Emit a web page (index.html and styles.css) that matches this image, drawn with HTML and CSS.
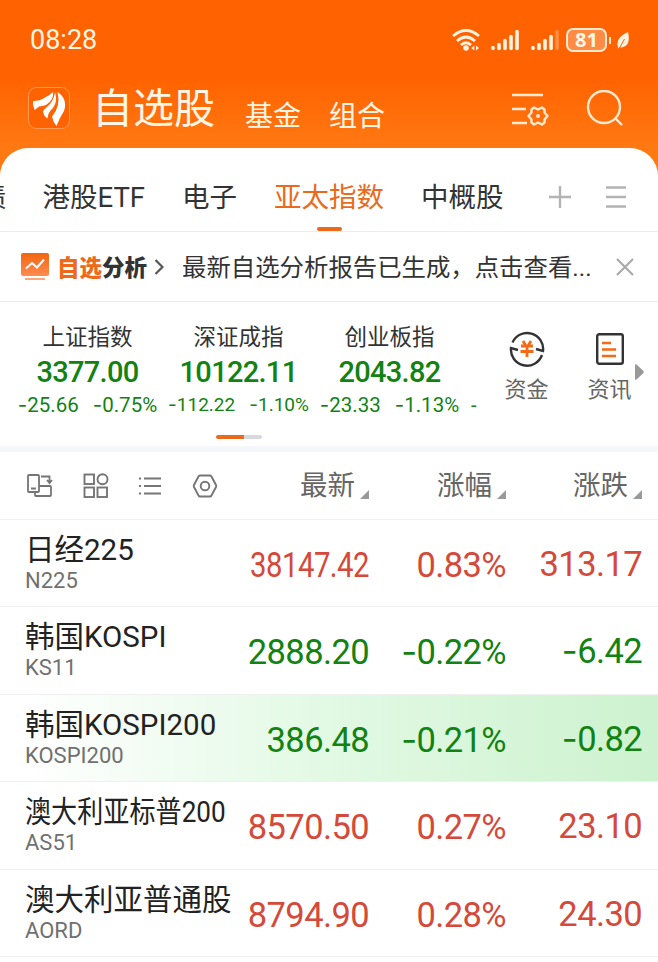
FILE: index.html
```
<!DOCTYPE html>
<html lang="zh-CN">
<head>
  <meta charset="UTF-8" />
  <meta name="viewport" content="width=device-width, initial-scale=1.0" />
  <title>自选股</title>
  <link rel="stylesheet" href="styles.css">
</head>
<body>
  <header class="header">
    <div class="status-bar">
      <span class="time">08:28</span>
      <div class="status-icons">
        <svg class="wifi" width="28" height="24" viewBox="0 0 28 24" fill="none" stroke="#fff3df" stroke-width="2.8">
          <path d="M1 8Q14-3 27 8M5 13Q14 5 23 13M9 17Q14 12.5 19 17"/>
          <circle cx="14" cy="20" r="2.8" fill="#fff3df" stroke="none"/>
          <path d="M22.3 17.5v5l-3-2.5zM24 17.5v5l3-2.5z" fill="#fff3df" stroke="none"/>
        </svg>
        <svg class="signal" width="28" height="22" viewBox="0 0 28 22" stroke="#fff3df" stroke-width="3.6" stroke-linecap="round">
          <path d="M2 18.5v1M8 15.5v4M14 11.5v8M20 7.5v12M26 2.5v17"/>
        </svg>
        <svg class="signal" width="28" height="22" viewBox="0 0 28 22" stroke="#fff3df" stroke-width="3.6" stroke-linecap="round">
          <path d="M2 18.5v1M8 15.5v4M14 11.5v8M20 7.5v12"/>
          <path d="M26 2.5v17" opacity=".3"/>
        </svg>
        <div class="battery">81</div>
        <svg width="12" height="18" viewBox="0 0 12 18">
          <path d="M11 1Q14 14 6 16Q4 17 3 16L1.5 17.5Q-3 7 11 1z" fill="#fff3df"/>
          <path d="M2.5 17L7.5 8" stroke="#ff6400" stroke-width="1"/>
        </svg>
      </div>
    </div>
    <div class="title-bar">
      <svg class="logo" width="42" height="42" viewBox="0 0 42 42">
        <rect x=".5" y=".5" width="41" height="41" rx="8" fill="#ff6200" stroke="#ff9a55"/>
        <path d="M5 14Q12 14 17 10.5Q22 8 25 5Q26 13 18 18Q14 19 11 19.5Q9 21 6.5 23Q4.5 18 5 14z" fill="#fff"/>
        <path d="M27 5Q30 14 25 21Q20 25 19.500 31.500Q16.500 30 15 25Q15 23 19 20Q26 14 27 5z" fill="#fff"/>
        <path d="M29.500 5Q40 12 36 24Q32 30 28.500 39Q25 35 24 29.500Q33 19 29.500 5z" fill="#fff"/>
      </svg>
      <span class="title-main">自选股</span>
      <span class="title-sub">基金</span>
      <span class="title-sub">组合</span>
      <div class="title-actions">
        <svg width="38" height="34" viewBox="0 0 38 34" fill="none" stroke="#ffe9cf" stroke-width="2.4">
          <path d="M1 2h31M1 16h14M1 30h15"/>
          <path d="M23 14.5l4 2 4-2 2.5 2v3l3 3.5-3 3.5v3l-2.5 2-4-2-4 2-2.5-2v-3l-3-3.5 3-3.5v-3z" stroke-linejoin="round"/>
          <circle cx="27" cy="23" r="2" fill="#ffe9cf" stroke="none"/>
        </svg>
        <svg width="38" height="38" viewBox="0 0 38 38" fill="none" stroke="#ffe9cf" stroke-width="2.4">
          <circle cx="18" cy="17" r="16"/>
          <path d="M29 28l7 7"/>
        </svg>
      </div>
    </div>
  </header>

  <main class="panel">
    <nav class="tabs">
      <span class="tab tab-cut">债</span>
      <span class="tab">港股ETF</span>
      <span class="tab">电子</span>
      <span class="tab active">亚太指数</span>
      <span class="tab">中概股</span>
      <div class="tab-actions">
        <svg width="24" height="24" viewBox="0 0 24 24" stroke="#b3b3b3" stroke-width="2.4"><path d="M12 1v22M1 12h22"/></svg>
        <svg width="22" height="24" viewBox="0 0 22 24" stroke="#b3b3b3" stroke-width="2.4"><path d="M1 2.5h20M1 12h20M1 21.5h20"/></svg>
      </div>
    </nav>

    <section class="notice">
      <svg class="notice-icon" width="28" height="28" viewBox="0 0 28 28">
        <defs>
          <linearGradient id="chartFill" x1="0" y1="0" x2="0" y2="1">
            <stop offset="0" stop-color="#f2650f"/>
            <stop offset="1" stop-color="#ff8c50"/>
          </linearGradient>
        </defs>
        <rect width="28" height="23" rx="2" fill="url(#chartFill)"/>
        <path d="M5 15.5l6-5.5 5 4.5 7-8" fill="none" stroke="#fff" stroke-width="2"/>
        <path d="M4 26h20" stroke="#f9a878" stroke-width="2"/>
      </svg>
      <b class="notice-name"><em>自选</em>分析</b>
      <svg class="notice-arrow" width="10" height="16" viewBox="0 0 10 16" fill="none" stroke="#555" stroke-width="2.2"><path d="M1.5 1l7 7-7 7"/></svg>
      <span class="notice-text">最新自选分析报告已生成，点击查看...</span>
      <svg class="notice-close" width="18" height="18" viewBox="0 0 18 18" stroke="#aaa" stroke-width="2.2"><path d="M1 1l16 16M17 1L1 17"/></svg>
    </section>

    <section class="market">
      <div class="indices">
        <div class="index">
          <div class="index-name">上证指数</div>
          <div class="index-value">3377.00</div>
          <div class="index-change"><span><i>-</i>25.66</span><span><i>-</i>0.75%</span></div>
        </div>
        <div class="index">
          <div class="index-name">深证成指</div>
          <div class="index-value">10122.11</div>
          <div class="index-change small"><span><i>-</i>112.22</span><span><i>-</i>1.10%</span></div>
        </div>
        <div class="index">
          <div class="index-name">创业板指</div>
          <div class="index-value">2043.82</div>
          <div class="index-change"><span><i>-</i>23.33</span><span><i>-</i>1.13%</span></div>
        </div>
        <div class="index-next">-</div>
      </div>
      <div class="shortcut">
        <svg width="36" height="36" viewBox="0 0 36 36" fill="none" stroke="#333" stroke-width="2.4">
          <path d="M3.5 11.5A16 16 0 0 1 34 20L27 18M33 24A16 16 0 0 1 2 17l7 2"/>
          <path d="M14 10l2.5 4M22 10l-2.5 4M12 15h12M11.5 20.5h13M18 15v11" stroke="#f56a16" stroke-width="2.8"/>
        </svg>
        <span>资金</span>
      </div>
      <div class="shortcut">
        <svg width="28" height="36" viewBox="0 0 28 36" fill="none" stroke="#333" stroke-width="2.4">
          <rect x="1.2" y="3.2" width="25.6" height="29.6" rx="2"/>
          <path d="M6 12h9M6 18.5h14M6 25h14" stroke="#f56a16" stroke-width="2.6"/>
        </svg>
        <span>资讯</span>
      </div>
      <svg class="more" width="9" height="16" viewBox="0 0 9 16"><path d="M0 1Q0 0 1.5 .5L8.5 7Q9 8 8.5 9L1.5 15.5Q0 16 0 15z" fill="#999"/></svg>
      <div class="pager"></div>
    </section>

    <section class="table">
      <div class="row table-head">
        <div class="tools">
          <svg width="26" height="24" viewBox="0 0 26 24" fill="none" stroke="#757575" stroke-width="1.8">
            <rect x="1" y="1" width="11" height="17" rx="1"/>
            <path d="M4 14.5h5M8 18v3q0 1 1 1h14q1 0 1-1v-8q0-1-1-1H12M14 2.5h8.5V8M20 6l2.5 3L25 6"/>
          </svg>
          <svg width="26" height="26" viewBox="0 0 26 26" fill="none" stroke="#757575" stroke-width="1.9">
            <rect x="1.5" y="1.5" width="9.5" height="9.5"/><circle cx="19.5" cy="6.3" r="5"/>
            <rect x="1.5" y="14.5" width="9.5" height="9.5"/><rect x="14.5" y="14.5" width="9.5" height="9.5"/>
          </svg>
          <svg width="24" height="20" viewBox="0 0 24 20" fill="none" stroke="#757575" stroke-width="2.2">
            <path d="M6 2.5h17M6 10h17M6 17.5h17"/><path d="M1 2.5h2M1 10h2M1 17.5h2"/>
          </svg>
          <svg width="26" height="24" viewBox="0 0 26 24" fill="none" stroke="#757575" stroke-width="1.9">
            <path d="M8 1.5h10q1 0 1.5 1l4.5 8.5q.5 1 0 2l-4.5 8.5q-.5 1-1.5 1H8q-1 0-1.5-1L2 13q-.5-1 0-2l4.500-8.500q.5-1 1.500-1z"/><circle cx="13" cy="12" r="4.3"/>
          </svg>
        </div>
        <div class="col">最新</div>
        <div class="col">涨幅</div>
        <div class="col">涨跌</div>
      </div>
      <div class="row up">
        <div class="stock"><div class="name">日经225</div><div class="code">N225</div></div>
        <div class="num"><span class="condensed">38147.42</span></div>
        <div class="num">0.83%</div>
        <div class="num">313.17</div>
      </div>
      <div class="row down">
        <div class="stock"><div class="name">韩国KOSPI</div><div class="code">KS11</div></div>
        <div class="num">2888.20</div>
        <div class="num"><i>-</i>0.22%</div>
        <div class="num"><i>-</i>6.42</div>
      </div>
      <div class="row down flash">
        <div class="stock"><div class="name">韩国KOSPI200</div><div class="code">KOSPI200</div></div>
        <div class="num">386.48</div>
        <div class="num"><i>-</i>0.21%</div>
        <div class="num"><i>-</i>0.82</div>
      </div>
      <div class="row up">
        <div class="stock"><div class="name narrow">澳大利亚标普200</div><div class="code">AS51</div></div>
        <div class="num">8570.50</div>
        <div class="num">0.27%</div>
        <div class="num">23.10</div>
      </div>
      <div class="row up">
        <div class="stock"><div class="name">澳大利亚普通股</div><div class="code">AORD</div></div>
        <div class="num">8794.90</div>
        <div class="num">0.28%</div>
        <div class="num">24.30</div>
      </div>
    </section>
  </main>
</body>
</html>
```
FILE: styles.css
```
* {
  box-sizing: border-box;
}
body {
  margin: 0;
  height: 962px;
  overflow: hidden;
  background: #fff;
  font-family: Roboto, "Noto Sans CJK SC", sans-serif;
  color: #333;
  white-space: nowrap;
}
svg {
  display: block;
  flex: none;
}
i, em {
  font-style: normal;
}
/* wider minus sign than Roboto has */
i {
  font-family: Inter, sans-serif;
  line-height: 1;
}

/* Header */
.header {
  height: 178px;
  background: linear-gradient(180deg, #ff6200 0, #ff6200 76px, #ff7913 148px);
  color: #fff6e6;
}
.status-bar {
  display: flex;
  justify-content: space-between;
  align-items: center;
  height: 80px;
  padding: 0 30px;
}
.time {
  font-size: 27px;
}
.status-icons {
  display: flex;
  align-items: center;
  gap: 12px;
}
.wifi {
  margin-right: -1px;
}
.battery {
  position: relative;
  width: 41px;
  height: 24px;
  margin: 0 -2px 0 -3px;
  border: 2px solid #ffe9cf;
  border-radius: 7px;
  background: #ff8b45;
  font-family: "Noto Sans", sans-serif;
  font-size: 20px;
  font-weight: 700;
  line-height: 20px;
  text-align: center;
}
.signal + .battery {
  margin-left: -5px;
}
.status-icons {
  margin-right: -1px;
}
.battery::after {
  content: "";
  position: absolute;
  right: -6px;
  top: 7px;
  width: 2px;
  height: 7px;
  background: #ffe9cf;
}
.title-bar {
  display: flex;
  align-items: flex-start;
  padding: 0 34px 0 28px;
}
.logo {
  margin: 7px 22px 0 0;
}
.title-main {
  margin-right: 30px;
  font-size: 41px;
  line-height: 59px;
}
.title-sub {
  margin-right: 28px;
  font-size: 28px;
  line-height: 73px;
}
.title-actions {
  display: flex;
  gap: 37px;
  margin: 10px 0 0 auto;
}
.title-actions svg:first-child {
  margin-top: 3px;
}

/* Panel */
.panel {
  margin-top: -30px;
  border-radius: 28px 28px 0 0;
  background: #fff;
  overflow: hidden;
}
.tabs {
  display: flex;
  height: 84px;
  border-bottom: 1px solid #ececec;
  font-size: 27.5px;
  line-height: 100px;
}
.tab {
  margin-right: 37px;
}
.tab-cut {
  margin: 0 36px 0 -21px;
}
.active {
  position: relative;
  color: #ea6a1c;
}
.active::after {
  content: "";
  position: absolute;
  left: 43px;
  top: 79px;
  width: 25px;
  height: 4px;
  border-radius: 2px;
  background: #ea6a1c;
}
.tab-actions {
  display: flex;
  gap: 33px;
  margin: 37px 31px 0 auto;
}
.notice {
  display: flex;
  align-items: center;
  height: 70px;
  padding: 0 24px 0 21px;
  border-bottom: 1px solid #ececec;
}
.notice-name {
  margin: -2px 7px 0 8px;
  font-size: 22.5px;
  font-weight: 900;
}
.notice-name em {
  color: #ee6a1a;
}
.notice-arrow {
  margin-right: 18px;
}
.notice-text {
  margin-top: -2px;
  font-size: 24.4px;
}
.notice-close {
  margin-left: auto;
}

/* Market overview */
.market {
  position: relative;
  display: flex;
  height: 150px;
  border-bottom: 6px solid #f5f7fa;
}
.indices {
  display: flex;
  width: 480px;
  padding: 20px 0 0 12px;
  overflow: hidden;
  text-align: center;
}
.index {
  flex: none;
  width: 151px;
}
.index-name {
  font-size: 22.5px;
  line-height: 31px;
}
.index-value {
  color: #128212;
  font-size: 29px;
  font-weight: 500;
  letter-spacing: -.7px;
  line-height: 38px;
}
.index-change {
  display: flex;
  justify-content: center;
  gap: 14px;
  color: #128212;
  font-size: 20.5px;
  line-height: 28px;
}
.index-change.small {
  font-size: 19px;
}
.index-next {
  padding: 69px 0 0 6px;
  color: #128212;
  font-size: 20px;
  line-height: 28px;
}
.shortcut {
  display: flex;
  flex-direction: column;
  align-items: center;
  gap: 7px;
  width: 83px;
  padding-top: 29px;
  color: #666;
  font-size: 22px;
  line-height: 32px;
}
.shortcut:nth-child(2) {
  margin-left: 5px;
}
.more {
  margin: 62px 0 0 -16px;
}
.pager {
  position: absolute;
  left: 216px;
  top: 133px;
  width: 46px;
  height: 4px;
  border-radius: 2px;
  background: linear-gradient(90deg, #ea6a1c 28px, #d8d9dd 28px);
}

/* Stock table */
.row {
  display: grid;
  grid-template-columns: 216px 128px 137px 136px;
  height: 87.5px;
  padding-left: 25px;
  border-bottom: 1px solid #f0f0f0;
}
.row.table-head {
  height: 67.5px;
}
.tools {
  display: flex;
  align-items: center;
  gap: 29.5px;
  height: 67px;
  padding-left: 2px;
}
.col {
  position: relative;
  padding-right: 14px;
  color: #666;
  font-size: 27.5px;
  line-height: 68px;
  text-align: right;
}
.col::after {
  content: "";
  position: absolute;
  right: 0;
  top: 38px;
  border-left: 9px solid transparent;
  border-bottom: 9px solid #999;
}
.name {
  padding-top: 11px;
  color: #222;
  font-size: 29.5px;
  line-height: 38px;
}
.narrow {
  transform: scaleX(.885);
  transform-origin: left;
}
.code {
  color: #707070;
  font-size: 22px;
  line-height: 24px;
}
.num {
  font-size: 34.5px;
  letter-spacing: -.6px;
  line-height: 90px;
  text-align: right;
}
.num:last-child {
  line-height: 88px;
}
.condensed {
  display: inline-block;
  margin-left: -40px;
  transform: scaleX(.85);
  transform-origin: right;
}
.up {
  color: #d4493a;
}
.down {
  color: #128212;
}
.flash {
  background: linear-gradient(90deg, #fff 3%, #e2f9e4 50%, #cdf2cf);
}
```
